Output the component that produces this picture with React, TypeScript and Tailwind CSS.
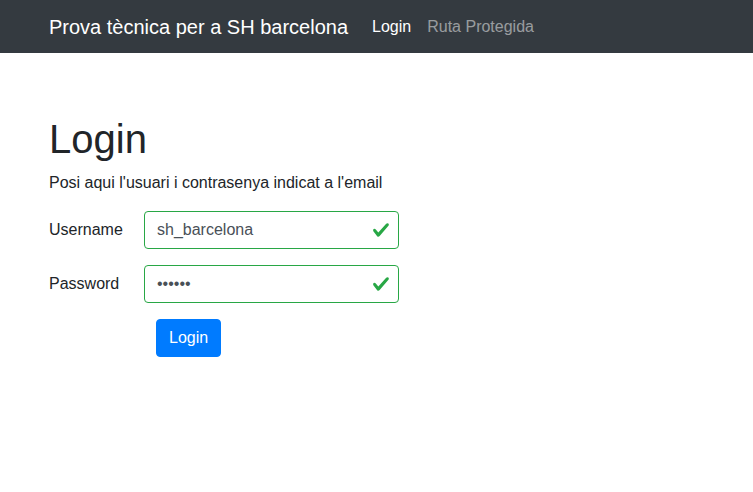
import React, { useState } from "react";

const font = { fontFamily: '"Liberation Sans", Arial, sans-serif' };

const ValidCheck = () => (
  <svg
    className="absolute right-[9px] top-1/2 -translate-y-1/2 w-[18px] h-[18px]"
    viewBox="0 0 8 8"
  >
    <path
      fill="#28a745"
      d="M2.3 6.73L.6 4.53c-.4-1.04.46-1.4 1.1-.8l1.1 1.4 3.4-3.8c.6-.63 1.6-.27 1.2.7l-4 4.6c-.43.5-.8.4-1.1.1z"
    />
  </svg>
);

const FormRow: React.FC<{
  label: string;
  type: string;
  value: string;
  onChange: (v: string) => void;
}> = ({ label, type, value, onChange }) => (
  <div className="flex items-start mb-4">
    <label className="w-[95px] py-[7px] leading-6 text-base text-[#212529]">
      {label}
    </label>
    <div className="relative w-[255px]">
      <input
        type={type}
        value={value}
        onChange={(e) => onChange(e.target.value)}
        className="block w-full h-[38px] pl-3 pr-9 text-base leading-6 text-[#495057] bg-white border border-[#28a745] rounded outline-none"
        style={font}
      />
      <ValidCheck />
    </div>
  </div>
);

export default function App() {
  const [username, setUsername] = useState("sh_barcelona");
  const [password, setPassword] = useState("123456");

  return (
    <div className="min-h-screen bg-white text-[#212529]" style={font}>
      <nav className="bg-[#343a40] h-[53px] flex items-center px-[49px]">
        <a className="text-white text-xl leading-[30px] mr-4">
          Prova tècnica per a SH barcelona
        </a>
        <div className="flex">
          <a className="text-white px-2 leading-6">Login</a>
          <a className="text-white/50 px-2 leading-6">Ruta Protegida</a>
        </div>
      </nav>

      <main className="px-[49px] pt-[62px]">
        <h1 className="text-[40px] leading-[48px] font-medium mb-2">Login</h1>
        <p className="text-base leading-6 mb-4">
          Posi aqui l'usuari i contrasenya indicat a l'email
        </p>
        <form onSubmit={(e) => e.preventDefault()}>
          <FormRow
            label="Username"
            type="text"
            value={username}
            onChange={setUsername}
          />
          <FormRow
            label="Password"
            type="password"
            value={password}
            onChange={setPassword}
          />
          <div className="pl-[107px]">
            <button
              type="submit"
              className="bg-[#007bff] text-white text-base leading-6 px-3 py-[6px] border border-[#007bff] rounded"
              style={font}
            >
              Login
            </button>
          </div>
        </form>
      </main>
    </div>
  );
}
